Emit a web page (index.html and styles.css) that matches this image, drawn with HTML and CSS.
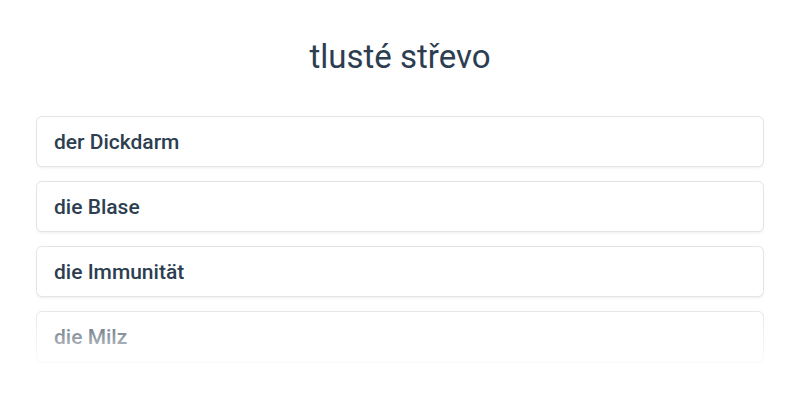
FILE: index.html
```html
<!DOCTYPE html>
<html lang="cs">
<head>
<meta charset="utf-8">
<link rel="stylesheet" href="styles.css">
</head>
<body>
<main class="page">
  <h1 class="title">tlusté střevo</h1>
  <div class="list-wrap">
    <ul class="list">
      <li class="card">der Dickdarm</li>
      <li class="card">die Blase</li>
      <li class="card">die Immunität</li>
      <li class="card">die Milz</li>
    </ul>
    <div class="fade"></div>
  </div>
</main>
</body>
</html>
```

FILE: styles.css
```css
html, body {
  margin: 0;
  padding: 0;
  background: #ffffff;
}
body {
  font-family: Roboto, "Liberation Sans", sans-serif;
  color: #2c3e50;
}
.page {
  padding: 0 36px;
  display: flex;
  flex-direction: column;
}
.title {
  margin: 37px 0 0;
  height: 40px;
  line-height: 40px;
  text-align: center;
  font-size: 33px;
  font-weight: 400;
  color: #2c3e50;
}
.list-wrap {
  position: relative;
  margin-top: 39px;
  height: 251px;
  overflow: hidden;
}
.list {
  list-style: none;
  margin: 0;
  padding: 0;
  display: flex;
  flex-direction: column;
  gap: 14px;
}
.card {
  height: 51px;
  box-sizing: border-box;
  padding: 0 17px;
  display: flex;
  align-items: center;
  border: 1px solid #e4e4e4;
  border-radius: 6px;
  background: #fff;
  box-shadow: 0 1px 3px rgba(0,0,0,0.07);
  font-size: 21px;
  font-weight: 500;
  color: #2c3e50;
}
.fade {
  position: absolute;
  left: 0;
  right: 0;
  bottom: 0;
  height: 56px;
  background: linear-gradient(to bottom, rgba(255,255,255,0.1), rgba(255,255,255,0.92));
  pointer-events: none;
}
```
